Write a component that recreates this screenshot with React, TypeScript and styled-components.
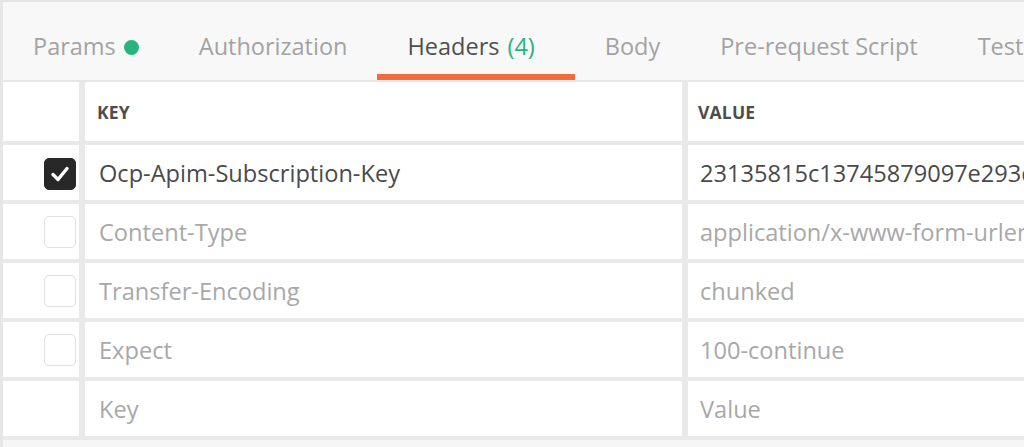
import React from "react";
import styled, { createGlobalStyle } from "styled-components";

const Global = createGlobalStyle`
  html, body { margin: 0; padding: 0; overflow: hidden; background: #f6f6f6; }
  body { font-family: "Open Sans", "Noto Sans", sans-serif; }
`;

const Page = styled.div`
  width: 1024px;
  height: 447px;
  box-sizing: border-box;
  border-top: 2px solid #e4e4e4;
  border-left: 3px solid #e6e6e6;
  background: #f6f6f6;
  overflow: hidden;
  display: flex;
  flex-direction: column;
`;

const TabBar = styled.div`
  display: flex;
  height: 80px;
  flex: none;
  box-sizing: border-box;
  background: #f8f8f8;
  border-bottom: 2px solid #e6e6e6;
  white-space: nowrap;
`;

const Tab = styled.div<{ $active?: boolean }>`
  display: flex;
  align-items: flex-start;
  box-sizing: border-box;
  height: 78px;
  padding: 29px 30px 0;
  font-size: 23.5px;
  line-height: 31px;
  color: ${(p) => (p.$active ? "#4f4f4f" : "#a3a3a3")};
  border-bottom: 6px solid ${(p) => (p.$active ? "#f26b3a" : "transparent")};
  flex: none;
`;

const Count = styled.span`
  color: #26b47f;
  margin-left: 8px;
  padding-right: 10px;
`;

const Dot = styled.span`
  width: 15px;
  height: 15px;
  border-radius: 50%;
  background: #26b47f;
  margin: 9px 0 0 8px;
`;

const Grid = styled.div`
  display: grid;
  grid-template-columns: 76px 597px 700px;
  grid-template-rows: 59px repeat(5, 55px);
  column-gap: 6px;
  row-gap: 4px;
  background: #e9e9e9;
  padding-bottom: 4px;
  width: max-content;
`;

const Cell = styled.div`
  background: #ffffff;
  display: flex;
  align-items: center;
  overflow: hidden;
  white-space: nowrap;
`;

const HeadCell = styled(Cell)<{ $pad: number }>`
  padding-left: ${(p) => p.$pad}px;
  font-size: 17.5px;
  font-weight: 700;
  color: #4d4d4d;
  letter-spacing: 0.2px;
`;

const TextCell = styled(Cell)<{ $tone: "on" | "off"; $pad: number }>`
  padding-left: ${(p) => p.$pad}px;
  font-size: 23.6px;
  color: ${(p) => (p.$tone === "on" ? "#4a4a4a" : "#a8a8a8")};
`;

const CheckCell = styled(Cell)`
  justify-content: flex-end;
  padding-right: 3px;
`;

const Box = styled.div<{ $checked?: boolean }>`
  width: 32px;
  height: 32px;
  box-sizing: border-box;
  border-radius: 5px;
  display: flex;
  align-items: center;
  justify-content: center;
  background: ${(p) => (p.$checked ? "#282828" : "#ffffff")};
  border: 1px solid ${(p) => (p.$checked ? "#282828" : "#e0e0e0")};
  margin-top: ${(p) => (p.$checked ? "2px" : "0")};
`;

const Check = () => (
  <svg width="22" height="22" viewBox="0 0 22 22">
    <polyline
      points="4,11.5 9,16.5 18,5.5"
      fill="none"
      stroke="#ffffff"
      strokeWidth="3.4"
      strokeLinecap="round"
      strokeLinejoin="round"
    />
  </svg>
);

type Row = { key: string; value: string; enabled?: boolean; checkbox: boolean };

const rows: Row[] = [
  { key: "Ocp-Apim-Subscription-Key", value: "23135815c13745879097e293c8a4d1f2", enabled: true, checkbox: true },
  { key: "Content-Type", value: "application/x-www-form-urlencoded", checkbox: true },
  { key: "Transfer-Encoding", value: "chunked", checkbox: true },
  { key: "Expect", value: "100-continue", checkbox: true },
  { key: "Key", value: "Value", checkbox: false },
];

export default function App() {
  return (
    <>
      <Global />
      <Page>
        <TabBar>
          <Tab>
            Params<Dot />
          </Tab>
          <Tab>Authorization</Tab>
          <Tab $active>
            Headers<Count>(4)</Count>
          </Tab>
          <Tab>Body</Tab>
          <Tab>Pre-request Script</Tab>
          <Tab>Tests</Tab>
        </TabBar>
        <Grid>
          <Cell />
          <HeadCell $pad={12}>KEY</HeadCell>
          <HeadCell $pad={10}>VALUE</HeadCell>
          {rows.map((r) => (
            <React.Fragment key={r.key}>
              <CheckCell>
                {r.checkbox && <Box $checked={r.enabled}>{r.enabled && <Check />}</Box>}
              </CheckCell>
              <TextCell $tone={r.enabled ? "on" : "off"} $pad={14}>{r.key}</TextCell>
              <TextCell $tone={r.enabled ? "on" : "off"} $pad={12}>{r.value}</TextCell>
            </React.Fragment>
          ))}
        </Grid>
      </Page>
    </>
  );
}
